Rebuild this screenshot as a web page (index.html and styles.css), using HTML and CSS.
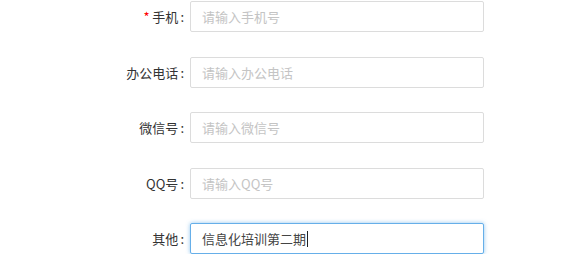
FILE: index.html
```html
<!DOCTYPE html>
<html lang="zh-CN">
<head>
<meta charset="utf-8">
<title>表单</title>
<link rel="stylesheet" href="styles.css">
</head>
<body>
<form class="form">
  <div class="row">
    <label class="label"><span class="req">*</span> 手机<span class="colon">:</span></label>
    <input class="input" type="text" placeholder="请输入手机号">
  </div>
  <div class="row">
    <label class="label">办公电话<span class="colon">:</span></label>
    <input class="input" type="text" placeholder="请输入办公电话">
  </div>
  <div class="row">
    <label class="label">微信号<span class="colon">:</span></label>
    <input class="input" type="text" placeholder="请输入微信号">
  </div>
  <div class="row">
    <label class="label">QQ号<span class="colon">:</span></label>
    <input class="input" type="text" placeholder="请输入QQ号">
  </div>
  <div class="row">
    <label class="label">其他<span class="colon">:</span></label>
    <div class="input focused"><span class="value">信息化培训第二期</span><span class="caret"></span></div>
  </div>
</form>
</body>
</html>
```
FILE: styles.css
```css
html, body {
  margin: 0;
  padding: 0;
  background: #fff;
}
body {
  font-family: "Noto Sans CJK SC", "Noto Sans", sans-serif;
  font-size: 13px;
  color: #333;
}
.form {
  display: flex;
  flex-direction: column;
  gap: 24.5px;
  padding-top: 1px;
}
.row {
  display: flex;
  align-items: center;
  height: 31px;
}
.label {
  box-sizing: border-box;
  width: 190px;
  text-align: right;
  padding-right: 6px;
  color: #333;
  font-size: 13px;
  line-height: 31px;
}
.colon {
  margin-left: 2px;
}
.req {
  color: #f00;
}
.input {
  box-sizing: border-box;
  width: 294px;
  height: 31px;
  border: 1px solid #dcdcdc;
  border-radius: 2px;
  padding: 0 11px;
  font-family: inherit;
  font-size: 13px;
  color: #555;
  outline: none;
  background: #fff;
}
.input::placeholder {
  color: #c4c4c4;
}
.focused {
  display: flex;
  align-items: center;
  border-color: #66afe9;
  box-shadow: 0 0 4px rgba(102, 175, 233, 0.7);
}
.value {
  color: #444;
}
.caret {
  display: inline-block;
  width: 1px;
  height: 16px;
  background: #222;
  margin-left: 1px;
}
```
